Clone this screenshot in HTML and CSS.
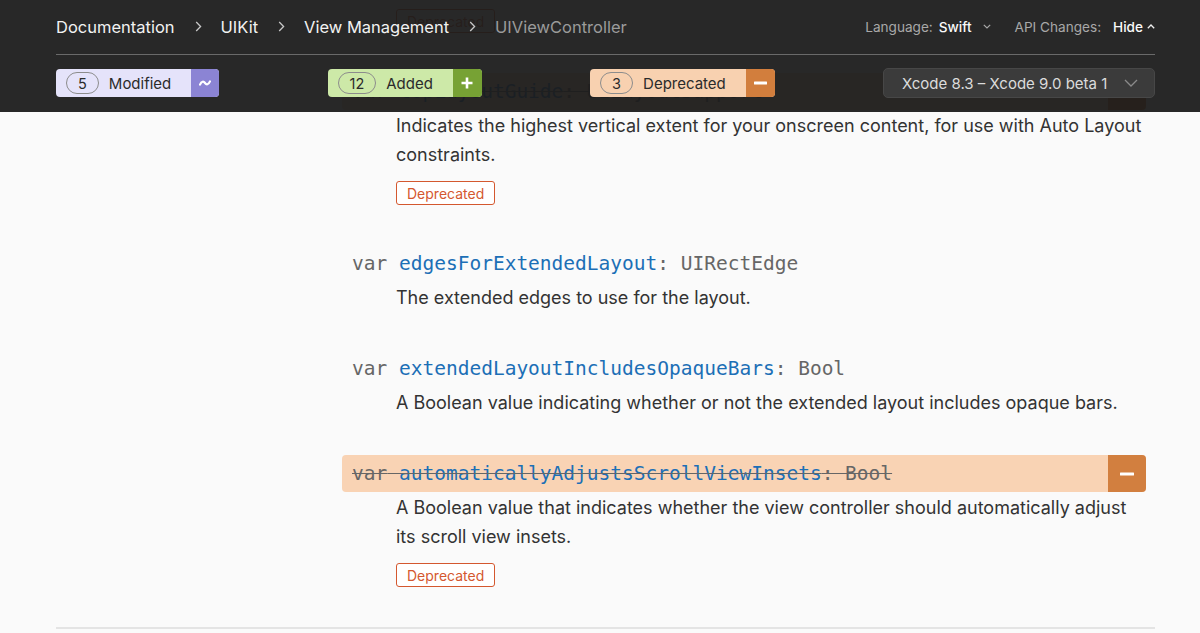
FILE: index.html
```html
<!DOCTYPE html>
<html lang="en">
<head>
<meta charset="utf-8">
<title>UIViewController – API Changes</title>
<link rel="stylesheet" href="styles.css">
</head>
<body>
<div class="page">
  <main class="main">
    <div class="list">
      <section class="item deprecated">
        <div class="decl">
          <code class="sig"><span class="kw">var</span> <span class="name">bottomLayoutGuide</span><span class="kw">: UILayoutSupport</span></code>
          <span class="decl-btn"><svg width="14" height="4" viewBox="0 0 14 4"><rect x="0" y="0.5" width="14" height="3" rx="0.5" fill="#fff"/></svg></span>
        </div>
        <p class="desc">Indicates the lowest vertical extent for your onscreen content, for use with Auto Layout constraints.</p>
        <span class="tag">Deprecated</span>
      </section>

      <section class="item deprecated">
        <div class="decl">
          <code class="sig"><span class="kw">var</span> <span class="name">topLayoutGuide</span><span class="kw">: UILayoutSupport</span></code>
          <span class="decl-btn"><svg width="14" height="4" viewBox="0 0 14 4"><rect x="0" y="0.5" width="14" height="3" rx="0.5" fill="#fff"/></svg></span>
        </div>
        <p class="desc">Indicates the highest vertical extent for your onscreen content, for use with Auto Layout constraints.</p>
        <span class="tag">Deprecated</span>
      </section>

      <section class="item">
        <div class="decl">
          <code class="sig"><span class="kw">var</span> <span class="name">edgesForExtendedLayout</span><span class="kw">: UIRectEdge</span></code>
        </div>
        <p class="desc">The extended edges to use for the layout.</p>
      </section>

      <section class="item">
        <div class="decl">
          <code class="sig"><span class="kw">var</span> <span class="name">extendedLayoutIncludesOpaqueBars</span><span class="kw">: Bool</span></code>
        </div>
        <p class="desc">A Boolean value indicating whether or not the extended layout includes opaque bars.</p>
      </section>

      <section class="item deprecated">
        <div class="decl">
          <code class="sig"><span class="kw">var</span> <span class="name">automaticallyAdjustsScrollViewInsets</span><span class="kw">: Bool</span></code>
          <span class="decl-btn"><svg width="14" height="4" viewBox="0 0 14 4"><rect x="0" y="0.5" width="14" height="3" rx="0.5" fill="#fff"/></svg></span>
        </div>
        <p class="desc">A Boolean value that indicates whether the view controller should automatically adjust its scroll view insets.</p>
        <span class="tag">Deprecated</span>
      </section>
    </div>
  </main>

  <header class="topbar">
    <div class="crumbs">
      <nav class="path">
        <span class="crumb">Documentation</span>
        <svg class="sep" width="7" height="11" viewBox="0 0 7 11"><polyline points="1.2,1 5.6,5.5 1.2,10" fill="none" stroke="#c8c8c8" stroke-width="1.3"/></svg>
        <span class="crumb">UIKit</span>
        <svg class="sep" width="7" height="11" viewBox="0 0 7 11"><polyline points="1.2,1 5.6,5.5 1.2,10" fill="none" stroke="#c8c8c8" stroke-width="1.3"/></svg>
        <span class="crumb">View Management</span>
        <svg class="sep" width="7" height="11" viewBox="0 0 7 11"><polyline points="1.2,1 5.6,5.5 1.2,10" fill="none" stroke="#c8c8c8" stroke-width="1.3"/></svg>
        <span class="crumb current">UIViewController</span>
      </nav>
      <div class="opts">
        <span class="opt-label">Language:</span>
        <span class="opt-value">Swift</span>
        <svg class="opt-chev down" width="8" height="5" viewBox="0 0 8 5"><polyline points="0.8,0.8 4,4 7.2,0.8" fill="none" stroke="#a8a8a8" stroke-width="1.2"/></svg>
        <span class="opt-label api">API Changes:</span>
        <span class="opt-value">Hide</span>
        <svg class="opt-chev up" width="8" height="5" viewBox="0 0 8 5"><polyline points="0.8,4.2 4,1 7.2,4.2" fill="none" stroke="#f0f0f0" stroke-width="1.3"/></svg>
      </div>
    </div>
    <div class="filters">
      <div class="badge modified">
        <span class="count">5</span>
        <span class="label">Modified</span>
        <span class="icon"><svg width="12" height="8" viewBox="0 0 12 8"><path d="M1 5.6 C2.6 2 4.6 2 6 4 C7.4 6 9.4 6 11 2.4" fill="none" stroke="#fff" stroke-width="2.2" stroke-linecap="round"/></svg></span>
      </div>
      <div class="badge added">
        <span class="count">12</span>
        <span class="label">Added</span>
        <span class="icon"><svg width="12" height="12" viewBox="0 0 12 12"><path d="M6 0.5 V11.5 M0.5 6 H11.5" stroke="#fff" stroke-width="2.6"/></svg></span>
      </div>
      <div class="badge removed">
        <span class="count">3</span>
        <span class="label">Deprecated</span>
        <span class="icon"><svg width="13" height="4" viewBox="0 0 13 4"><rect x="0" y="0.5" width="13" height="3" rx="0.5" fill="#fff"/></svg></span>
      </div>
      <div class="version">
        <span class="version-text">Xcode 8.3 – Xcode 9.0 beta 1</span>
        <svg class="version-chev" width="14" height="8" viewBox="0 0 14 8"><polyline points="1,1 7,7 13,1" fill="none" stroke="#8a8a8a" stroke-width="1.3"/></svg>
      </div>
    </div>
  </header>
</div>
</body>
</html>
```

FILE: styles.css
```css
* { box-sizing: border-box; }

html, body {
  margin: 0;
  padding: 0;
  background: #fafafa;
}

body {
  font-family: "Inter", "Noto Sans", "Liberation Sans", sans-serif;
  color: #333;
  overflow: hidden;
}

.page {
  position: relative;
  width: 1200px;
  height: 633px;
  overflow: hidden;
}

/* ---------- content ---------- */
.main {
  padding: 0 45px 0 56px;
}

.list {
  margin-top: -99px;
  padding-left: 286px;
  border-bottom: 2px solid #e4e4e4;
}

.item {
  display: flex;
  flex-direction: column;
  align-items: flex-start;
  margin-bottom: 38px;
}

.decl {
  align-self: stretch;
  display: flex;
  align-items: center;
  height: 37px;
  margin-right: 9px;
  padding-left: 10px;
  border-radius: 4px;
  overflow: hidden;
}

.sig {
  font-family: "DejaVu Sans Mono", "Liberation Mono", monospace;
  font-size: 19.5px;
  color: #666;
  white-space: nowrap;
}

.sig .kw { color: #666; }
.sig .name { color: #1c6fb6; }

.deprecated .decl { background: #f9d3b4; }
.deprecated .sig { text-decoration: line-through; }

.decl-btn {
  margin-left: auto;
  width: 38px;
  height: 37px;
  background: #d27f3f;
  display: flex;
  align-items: center;
  justify-content: center;
}

.desc {
  margin: 0 7px 0 0;
  padding: 1px 0 0 54px;
  font-size: 18px;
  line-height: 29px;
  color: #333;
}

.tag {
  margin: 12px 0 2px 54px;
  height: 24px;
  padding: 0 10px;
  display: inline-flex;
  align-items: center;
  border: 1px solid #d4582f;
  border-radius: 3px;
  background: #fff;
  color: #d4582f;
  font-size: 14px;
}

/* ---------- header overlay ---------- */
.topbar {
  position: absolute;
  top: 0;
  left: 0;
  width: 1200px;
  height: 112px;
  padding: 0 45px 0 56px;
  background: rgba(27, 27, 27, 0.94);
}

.crumbs {
  height: 55px;
  display: flex;
  align-items: center;
  justify-content: space-between;
  border-bottom: 1px solid #6a6a6a;
  padding-bottom: 1px;
}

.path {
  display: flex;
  align-items: center;
  font-size: 16.5px;
  color: #f2f2f2;
}

.sep { margin: 0 19px 0 20px; }

.crumb.current { color: #9b9b9b; }

.opts {
  display: flex;
  align-items: center;
  font-size: 13.6px;
}

.opt-label { color: #a8a8a8; margin-right: 6px; }
.opt-label.api { margin-left: 24px; margin-right: 12px; }
.opt-value { color: #fafafa; font-weight: 500; }
.opt-chev.down { margin-left: 11px; }
.opt-chev.up { margin-left: 4px; }

.filters {
  display: flex;
  justify-content: space-between;
  align-items: center;
  margin-top: 13px;
}

.badge {
  display: flex;
  align-items: center;
  height: 28px;
  border-radius: 4px;
  overflow: hidden;
  color: #2b2b2b;
}

.count {
  margin-left: 10px;
  height: 22px;
  padding: 0 11px;
  min-width: 32px;
  display: flex;
  align-items: center;
  justify-content: center;
  border: 1px solid #8c8c8c;
  border-radius: 11px;
  font-size: 14.5px;
}

.label {
  margin: 0 20px 0 10px;
  font-size: 15px;
}

.icon {
  width: 28px;
  height: 28px;
  display: flex;
  align-items: center;
  justify-content: center;
}

.modified { background: #e5e3fa; }
.modified .icon { background: #8b84d4; }
.added { background: #cde9a8; }
.added .icon { background: #77a234; width: 29px; }
.removed { background: #f8d1b0; }
.removed .icon { background: #d27e3d; width: 29px; }

.version {
  width: 272px;
  height: 30px;
  display: flex;
  align-items: center;
  padding: 0 16px 0 18px;
  background: #3b3b3b;
  border: 1px solid #474747;
  border-radius: 5px;
}

.version-text {
  font-size: 15px;
  color: #dcdcdc;
  white-space: nowrap;
}

.version-chev { margin-left: auto; }
```
